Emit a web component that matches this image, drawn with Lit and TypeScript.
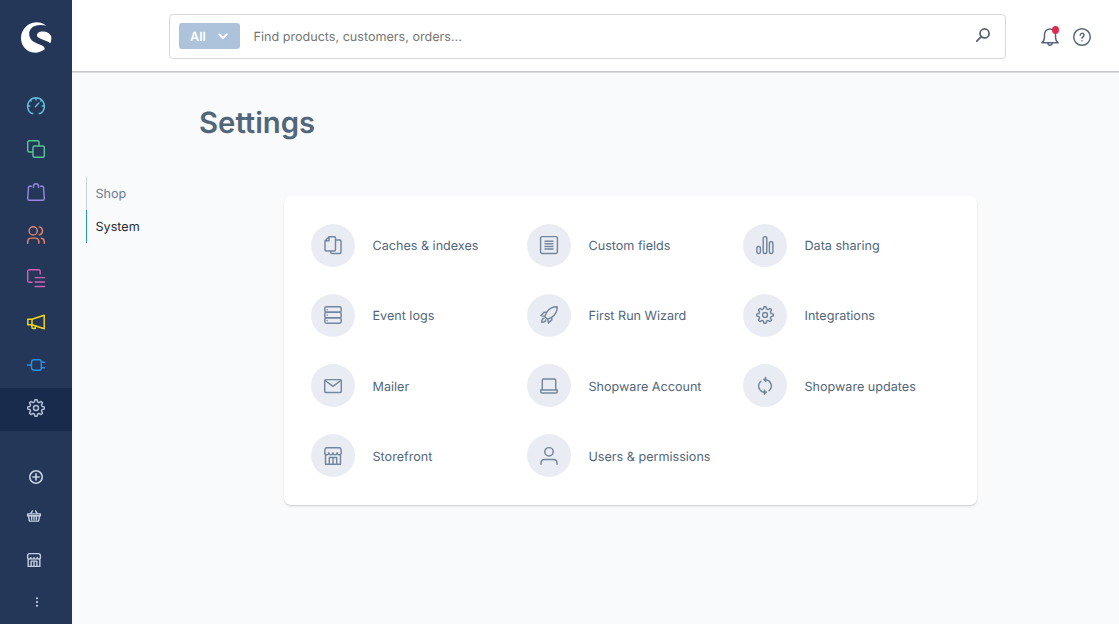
import { LitElement, html, svg, css } from "lit";
import { customElement, property } from "lit/decorators.js";

// Outline of an eight-toothed gear centred at (9, 9).
function gearOutline(): string {
  const at = (deg: number, r: number) => {
    const a = ((deg - 90) * Math.PI) / 180;
    return `${(9 + r * Math.cos(a)).toFixed(2)} ${(9 + r * Math.sin(a)).toFixed(2)}`;
  };
  let d = "";
  for (let i = 0; i < 8; i++) {
    const c = i * 45;
    d += `${i ? "L" : "M"}${at(c - 13, 6.5)} L${at(c - 10, 7.8)} Q${at(c - 8, 8.3)} ${at(c - 4, 8.3)} L${at(c + 4, 8.3)} Q${at(c + 8, 8.3)} ${at(c + 10, 7.8)} L${at(c + 13, 6.5)} Q${at(c + 22.5, 5.7)} ${at(c + 32, 6.5)} `;
  }
  return d + "Z";
}

const icons: Record<string, unknown> = {
  gauge: svg`<path d="M5.8 16.4H4.6A8.4 8.4 0 1 1 13.4 16.4H12.2M9 .8V3M.6 9H2.800M15.2 9h2.200M3.200 3.100l1 1M14.800 3.100l-1 1M8.400 9.800 11.800 6"/>`,
  copies: svg`<path d="M5.600 12H2.200A1.500 1.500 0 0 1 .7 10.500V2.200A1.500 1.500 0 0 1 2.200.7h8.300A1.500 1.500 0 0 1 12 2.200V5.600"/><rect x="6" y="6" width="11.300" height="11.300" rx="1.500"/>`,
  bag: svg`<path d="M4.400 3.300H2.600Q1.600 3.300 1.500 4.300L.7 15.500Q.7 17.300 2.400 17.300H15.600Q17.300 17.300 17.300 15.500L16.500 4.300Q16.400 3.300 15.400 3.300H13.600M6.500 4.500V3.300a2.500 2.500 0 0 1 5 0V4.500"/>`,
  people: svg`<circle cx="6.200" cy="4.900" r="4.100"/><path d="M.7 17.300V15.600A3.500 3.500 0 0 1 4.200 12.100H8.300A3.500 3.500 0 0 1 11.800 15.600V17.300M12.300.9a4.100 4.100 0 0 1 0 8M14.300 12.200a3.400 3.400 0 0 1 3 3.400v1.700"/>`,
  content: svg`<path d="M5 13.200H2.200A1.500 1.500 0 0 1 .7 11.700V2.200A1.500 1.500 0 0 1 2.200.7H11.700A1.500 1.500 0 0 1 13.200 2.200V5M8.200 8.600H17.600M8.200 13H17.600M8.200 17.400H17.600"/>`,
  horn: svg`<path d="M.8 6.300H5V11.700H.8ZM5 6.300 17.200 2.300V15.700L5 11.700M4.900 11.700V14.200Q4.900 15.400 6.200 15.400H8.300V12.900"/>`,
  plug: svg`<path d="M.5 9H4.500M7.200 3.700H12.200Q14.300 3.700 14.300 5.800V12.200Q14.300 14.300 12.200 14.300H7.200Q4.500 14.300 4.500 11.600V6.400Q4.500 3.700 7.200 3.700ZM14.300 6.300H17.500M14.300 11.700H17.500"/>`,
  gear: svg`<path d=${gearOutline()}/><circle cx="9" cy="9" r="2.500"/>`,
  plus: svg`<circle cx="9" cy="9" r="8"/><path d="M9 5V13M5 9H13"/>`,
  basket: svg`<path d="M.8 6.300H17.200V8.600H.8ZM1.800 8.600 3.200 15.600H14.800L16.200 8.600M6 9.500V13.500M9 9.500V13.500M12 9.500V13.500M4.800 6 7 2.500M13.200 6 11 2.500"/>`,
  store: svg`<path d="M1.500 7.500V17.200H16.500V7.500M.7 5.500 1 2.500Q1.200.8 2.800.8H15.200Q16.800.8 17 2.500L17.300 5.500A2.100 2.100 0 0 1 13.100 5.800A2.050 2.050 0 0 1 9 5.800A2.050 2.050 0 0 1 4.900 5.800A2.100 2.100 0 0 1 .7 5.500ZM5.300 17V10.500H12.700V17M9 10.500V17"/>`,
  dots: svg`<path d="M9 3.300V3.400M9 9V9.100M9 14.700V14.800" stroke-width="3.200"/>`,
  search: svg`<circle cx="11" cy="7" r="5.800"/><path d="M6.800 11.200 1 17"/>`,
  bell: svg`<path d="M.8 14.800Q3.500 12.800 3.500 9V6.500A5.500 5.500 0 0 1 14.500 6.500V9Q14.500 12.800 17.200 14.800ZM7 15.200a2 2 0 0 0 4 0"/>`,
  help: svg`<circle cx="9" cy="9" r="8.300"/><path d="M7.200 7.200A1.900 1.900 0 1 1 9.800 9Q9 9.400 9 10.300M9 12.700V12.800"/>`,
  chevron: svg`<path d="M3.500 6.500 9 12 14.500 6.500"/>`,
  files: svg`<path d="M5 .7H10.300Q11.500.7 11.500 1.900V13.800Q11.500 15 10.300 15H2.200Q1 15 1 13.800V4.700ZM5 .7V4.700H1M11.500 4H15.800Q17 4 17 5.200V16.200Q17 17.400 15.800 17.400H8Q6.700 17.400 6.700 16.200V15"/>`,
  fields: svg`<rect x=".6" y=".6" width="16.800" height="16.800" rx="1.300"/><path d="M5 5.200H13M5 7.800H13M5 10.400H13M5 13H13"/>`,
  bars: svg`<rect x=".9" y="10.400" width="3.500" height="7" rx="1.400"/><rect x="7.200" y=".8" width="3.600" height="16.600" rx="1.500"/><rect x="13.400" y="5.700" width="3.500" height="11.700" rx="1.500"/>`,
  server: svg`<rect x=".8" y=".8" width="16.400" height="5.500" rx="1.700"/><rect x=".8" y="6.300" width="16.400" height="5.500" rx="1.700"/><rect x=".8" y="11.800" width="16.400" height="5.500" rx="1.700"/><path d="M3.200 3.600V3.700M3.200 9V9.100M3.200 14.500V14.600"/>`,
  rocket: svg`<path d="M17.200.8Q10.500.6 6.800 6.200L4.700 10.500 7.500 13.300 11.800 11.200Q17.400 7.500 17.200.8ZM6.800 6.200H4.200L.9 9.500 4.800 10.300M11.800 11.200V13.800L8.500 17.100 7.700 13.200M4 12.300Q1.800 12.500 1.800 16.200Q5.500 16.200 5.700 14"/>`,
  mail: svg`<rect x=".7" y="2.600" width="16.600" height="12.800" rx="1.200"/><path d="M1.100 3.500 9 9.300 16.900 3.500"/>`,
  laptop: svg`<path d="M2.300 13V3.200Q2.300 2 3.500 2H14.500Q15.700 2 15.700 3.200V13M.7 13H17.300V14.400Q17.300 16 15.700 16H2.300Q.7 16 .7 14.400Z"/>`,
  sync: svg`<path d="M4.900 4.200A6.300 6.300 0 0 0 8.700 15.300M9.300 2.700A6.300 6.300 0 0 1 13.100 13.800"/><path d="M10 .3V5.100L7.300 2.700ZM8 12.900V17.700L10.700 15.300Z" fill="currentColor" stroke-width=".7"/>`,
  user: svg`<circle cx="9" cy="4.800" r="4.200"/><path d="M1 17.300V16.200Q1 12.500 4.700 12.500H13.300Q17 12.500 17 16.200V17.300"/>`,
};

@customElement("ui-icon")
class UiIcon extends LitElement {
  static styles = css`
    :host { display: block; flex: none; width: 18px; height: 18px; }
    svg {
      display: block; width: 100%; height: 100%; overflow: visible;
      fill: none; stroke: currentColor; stroke-width: var(--line, 1.45);
      stroke-linecap: round; stroke-linejoin: round;
    }
  `;
  @property() name = "";
  render() {
    return html`<svg viewBox="0 0 18 18">${icons[this.name]}</svg>`;
  }
}

@customElement("app-root")
class AppRoot extends LitElement {
  static styles = css`
    :host {
      display: flex; width: 100%; height: 624px; overflow: hidden;
      background: #f9fafc; color: #52667a;
      font: 400 12.600px/20px Inter, sans-serif;
      font-optical-sizing: none; text-rendering: geometricPrecision;
    }
    * { box-sizing: border-box; }
    .sidebar {
      flex: none; width: 72px; background: #243758;
      display: flex; flex-direction: column; align-items: center;
    }
    .logo { width: 31px; height: 31px; margin: 22px 0 33px; flex: none; display: block; }
    .nav { width: 72px; display: flex; flex-direction: column; }
    .item { height: 43.100px; padding-bottom: 3px; display: flex; align-items: center; justify-content: center; }
    .item.active { background: #182b4c; }
    .cyan { color: #62bdd8; }
    .green { color: #56c596; }
    .violet { color: #9289dc; }
    .coral { color: #e5826c; }
    .pink { color: #d05fb4; }
    .yellow { color: #f5d914; }
    .blue { color: #2492e8; }
    .pale { color: #b4c2d6; }
    .tools { width: 72px; padding-top: 39px; color: #c5d0e3; --line: 1.8; }
    .tools ui-icon { width: 14px; height: 14px; margin-left: 27px; }
    .tools .add { margin-left: 29px; --line: 2.100; }
    .tools .cart { margin-top: 25.500px; }
    .tools .shop { margin-top: 29.500px; }
    .tools .more { width: 12px; height: 12px; margin: 29px 0 0 30.500px; }
    .main { flex: 1; min-width: 0; display: flex; flex-direction: column; }
    .header {
      height: 72px; flex: none; background: #fff; border-bottom: 1px solid #c3c6c8;
      box-shadow: 0 1px 0 #d9dbdd;
      display: flex; align-items: center; padding: 1px 28px 0 97px;
    }
    .search {
      width: 837px; height: 45px; border: 1px solid #d6d8da; border-radius: 4px;
      display: flex; align-items: center; padding: 0 15px 0 9px; color: #757575;
    }
    .scope {
      width: 61px; height: 26px; border-radius: 3px; background: #adc3dc; color: #fff;
      display: flex; align-items: center; justify-content: space-between;
      padding: 0 11px; font-weight: 600; margin-right: 13.500px;
    }
    .scope span, .placeholder, .label { padding-top: 3.300px; }
    .scope ui-icon { width: 12px; height: 12px; --line: 3; }
    .search .placeholder { flex: 1; }
    .search .lens { width: 14px; height: 14px; --line: 2.200; color: #56606e; margin-bottom: 3px; }
    .bell { position: relative; margin: 1px 0 0 35px; color: #55657a; }
    .badge { position: absolute; right: 0; top: -2px; width: 7px; height: 8px; border-radius: 50%; background: #de294c; }
    .help { margin: 1px 0 0 14px; color: #55657a; }
    .title { margin: 32px 0 0 127px; font-size: 29.300px; line-height: 40px; font-weight: 600; }
    .content { display: flex; align-items: flex-start; padding: 33px 0 0 14px; }
    .tabs { width: 198px; display: flex; flex-direction: column; }
    .tab { height: 33px; border-left: 1px solid #c8d0d8; padding: 8.200px 0 0 8.500px; color: #6a7b90; }
    .tab.current { border-color: #2b8fd0; color: #252b34; }
    .card {
      width: 693px; height: 309px; margin-top: 19px; border-radius: 7px; background: #fff;
      box-shadow: 0 1px 1px rgba(0,0,0,.1), 0 2px 3px rgba(0,0,0,.07);
      display: grid; grid-template-columns: repeat(3, 216px); grid-auto-rows: 70.300px;
      padding: 27.600px 0 0 27px;
    }
    .entry { display: flex; align-items: center; height: 43px; gap: 17.500px; white-space: nowrap; }
    .entry .label { padding-top: 3.800px; }
    .disc {
      width: 44px; height: 43px; border-radius: 50%; background: #e9edf3; color: #74869b;
      display: grid; place-items: center;
    }
  `;

  private nav = [
    ["gauge", "cyan"], ["copies", "green"], ["bag", "violet"], ["people", "coral"],
    ["content", "pink"], ["horn", "yellow"], ["plug", "blue"], ["gear", "pale active"],
  ];

  private entries = [
    ["files", "Caches & indexes"], ["fields", "Custom fields"], ["bars", "Data sharing"],
    ["server", "Event logs"], ["rocket", "First Run Wizard"], ["gear", "Integrations"],
    ["mail", "Mailer"], ["laptop", "Shopware Account"], ["sync", "Shopware updates"],
    ["store", "Storefront"], ["user", "Users & permissions"],
  ];

  render() {
    return html`
      <aside class="sidebar">
        <svg class="logo" viewBox="0 0 31 31" fill="#fff">
          <path d="M25.300 3.600C14 1.200 8 5.800 8.200 12.200C8.400 19.500 16 21.300 20.500 23.200C23.200 24.400 24 25.800 23.500 27.600C16 33 6.500 31 2.200 24C-2.300 16.500 .5 6.700 8 2.300C13.500-.9 20.300-.4 25.300 3.600Z"/>
          <path d="M30.300 14.500C30.400 17 30.300 19 29.400 21.300C26 18.600 20.500 17.500 17.600 15.800C15 14 15.700 10.200 19.500 9.700C24 9.200 28.600 10.400 30.300 14.500Z"/>
        </svg>
        <nav class="nav">
          ${this.nav.map(([icon, tone]) => html`<div class="item ${tone}"><ui-icon name=${icon}></ui-icon></div>`)}
        </nav>
        <div class="tools">
          <ui-icon class="add" name="plus"></ui-icon>
          <ui-icon class="cart" name="basket"></ui-icon>
          <ui-icon class="shop" name="store"></ui-icon>
          <ui-icon class="more" name="dots"></ui-icon>
        </div>
      </aside>
      <main class="main">
        <header class="header">
          <div class="search">
            <div class="scope"><span>All</span><ui-icon name="chevron"></ui-icon></div>
            <span class="placeholder">Find products, customers, orders...</span>
            <ui-icon class="lens" name="search"></ui-icon>
          </div>
          <div class="bell"><ui-icon name="bell"></ui-icon><span class="badge"></span></div>
          <ui-icon class="help" name="help"></ui-icon>
        </header>
        <h1 class="title">Settings</h1>
        <div class="content">
          <div class="tabs">
            <div class="tab">Shop</div>
            <div class="tab current">System</div>
          </div>
          <section class="card">
            ${this.entries.map(([icon, label]) => html`
              <div class="entry">
                <div class="disc"><ui-icon name=${icon}></ui-icon></div>
                <span class="label">${label}</span>
              </div>`)}
          </section>
        </div>
      </main>
    `;
  }
}
